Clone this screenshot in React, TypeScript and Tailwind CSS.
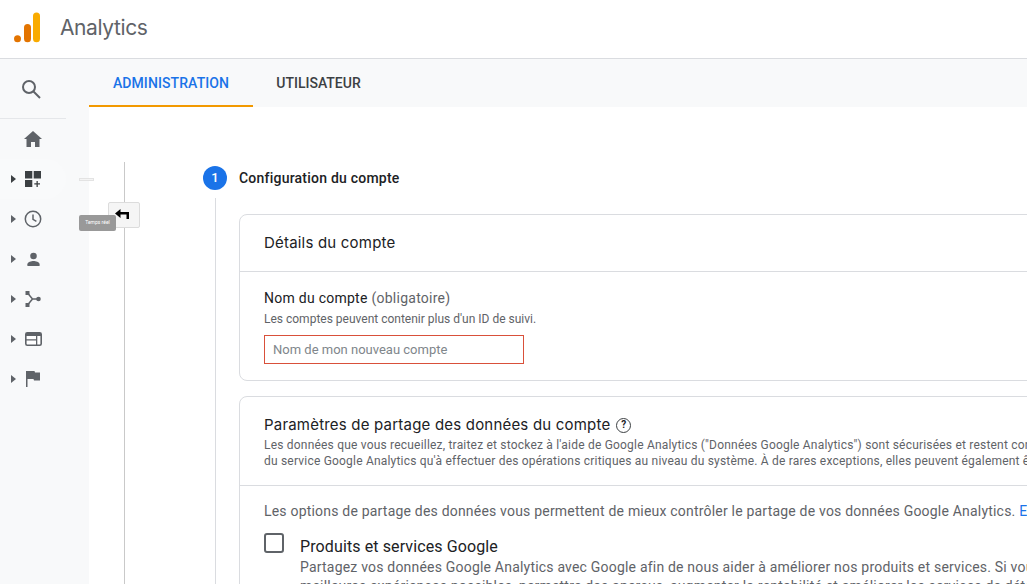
import React from "react";

const Caret = ({ dark }: { dark?: boolean }) => (
  <svg width="5" height="8" viewBox="0 0 5 8" className="absolute left-[11px] top-1/2 -translate-y-1/2">
    <path d="M0 0l5 4-5 4z" fill={dark ? "#3c4043" : "#5f6368"} />
  </svg>
);

const icons: React.ReactNode[] = [
  <svg key="d" width="16" height="16" viewBox="0 0 16 16" fill="#3c4043"><path d="M0 0h7.300v7.500H0zM8.700 0H16v7.500H8.700zM0 9h7.300v7H0zM11.500 10h1.300v2.200H15v1.300h-2.200V16h-1.300v-2.500H9.300v-1.300h2.200z" /></svg>,
  <svg key="c" width="18" height="18" viewBox="0 0 18 18" fill="none" stroke="#5f6368" strokeWidth="1.500"><circle cx="9" cy="9" r="7.700" /><path d="M9 4.500V9.400l3.400 2" /></svg>,
  <svg key="p" width="15" height="15" viewBox="0 0 16 16" fill="#5f6368"><circle cx="8" cy="4.200" r="3.500" /><path d="M1.500 15v-2c0-2.400 4.300-3.500 6.500-3.500s6.500 1.100 6.500 3.500v2z" /></svg>,
  <svg key="b" width="16" height="16" viewBox="0 0 16 16"><path d="M2.500 2l5 6h6M2.500 14l5-6" stroke="#5f6368" strokeWidth="1.500" fill="none" /><rect x="0.500" y="0" width="4" height="4" fill="#5f6368" /><rect x="0.500" y="12" width="4" height="4" fill="#5f6368" /><circle cx="13.500" cy="8" r="2.300" fill="#5f6368" /></svg>,
  <svg key="w" width="17" height="14" viewBox="0 0 17 14"><rect x="0.800" y="0.800" width="15.400" height="12.400" rx="1.500" fill="#fff" stroke="#5f6368" strokeWidth="1.600" /><path d="M1 1h15v3H1zM1 7.200h10v1.300H1zM11 4h1.300v9H11z" fill="#5f6368" /></svg>,
  <svg key="f" width="14" height="16" viewBox="0 0 14 16" fill="#5f6368"><path d="M0 0h1.500v16H0zM1.500 0h7l.5 1.500h5v8H8l-.5-1.500h-6z" /></svg>,
];

export default function App() {
  return (
    <div className="h-[584px] w-[1027px] overflow-hidden bg-white font-['Roboto',sans-serif] text-[#3c4043] relative">
      <header className="flex h-[59px] items-center border-b border-[#dadce0] bg-white">
        <svg width="28" height="32" viewBox="0 0 28 32" className="ml-[14px] mb-[3px]">
          <circle cx="3.500" cy="26.800" r="3.500" fill="#e37400" />
          <rect x="10" y="12" width="7" height="18.300" rx="3.500" fill="#e37400" />
          <rect x="19" y="0.500" width="7" height="29.800" rx="3.500" fill="#f9ab00" />
        </svg>
        <span className="ml-[18px] mb-[3px] font-['Inter',sans-serif] text-[21px] leading-none text-[#5f6368] tracking-[-0.4px]">Analytics</span>
      </header>

      <div className="flex h-[525px]">
        <aside className="w-[89px] shrink-0 bg-[#f8f9fa]">
          <div className="mr-[23px] flex h-[60px] items-center justify-center border-b border-[#e5e7ea]">
            <svg width="20" height="20" viewBox="0 0 20 20" fill="none" stroke="#5f6368" strokeWidth="2" className="mt-[1px] ml-[-4px]">
              <circle cx="8" cy="8" r="6" />
              <path d="M12.500 12.500L19 19" />
            </svg>
          </div>
          <div className="flex h-[40px] w-[66px] items-center justify-center">
            <svg width="18" height="16" viewBox="0 0 18 16" fill="#5f6368"><path d="M9 0L0 8h2.500v8H7v-5h4v5h4.500V8H18z" /></svg>
          </div>
          {icons.map((icon, i) => (
            <div key={i} className={`relative flex h-[40px] w-[66px] items-center justify-center rounded-r-[20px] ${i === 0 ? "bg-[#f9fafb]" : ""}`}>
              <Caret dark={i === 0} />
              {icon}
            </div>
          ))}
        </aside>

        <main className="relative flex-1 overflow-hidden">
          <nav className="flex h-[48px] bg-[#f8f9fa] text-[14px] font-medium">
            <div className="flex w-[164px] items-center justify-center border-b-2 border-[#f29900] pt-[2px] text-[#1a73e8] tracking-[0.1px]">ADMINISTRATION</div>
            <div className="flex w-[130px] items-center justify-center pl-[1px] text-[#3c4043]">UTILISATEUR</div>
          </nav>

          <div className="ml-[35px] mt-[55px] h-[500px] border-l border-[#c9c9c9] pl-[78px] pt-[4px]">
            <div className="flex items-center">
              <div className="flex h-[24px] w-[24px] items-center justify-center rounded-full bg-[#1a73e8] text-[13px] font-medium text-white">1</div>
              <div className="ml-[12px] text-[14px] font-medium tracking-[0.22px] text-[#202124]">Configuration du compte</div>
            </div>
            <div className="ml-[12px] mt-[8px] w-[1000px] border-l border-[#dadce0] pl-[23px] pt-[16px]">
              <section className="h-[167px] rounded-[8px] border border-[#dadce0]">
                <div className="flex h-[57px] items-center border-b border-[#dadce0] pl-[24px] font-['Inter',sans-serif] text-[15px] tracking-[0.2px] text-[#202124]">Détails du compte</div>
                <div className="pl-[24px] pt-[17px]">
                  <div className="text-[14px] leading-[18px] tracking-[0.26px] text-[#202124]">Nom du compte <span className="text-[#5f6368]">(obligatoire)</span></div>
                  <div className="mt-[4px] text-[12px] leading-[16px] text-[#5f6368]">Les comptes peuvent contenir plus d'un ID de suivi.</div>
                  <input placeholder="Nom de mon nouveau compte" className="mt-[8px] block h-[29px] w-[260px] border border-[#d9503a] px-[8px] text-[13px] placeholder:text-[#80868b] outline-none" />
                </div>
              </section>
              <section className="mt-[15px] h-[300px] rounded-[8px] border border-[#dadce0]">
                <div className="h-[89px] whitespace-nowrap border-b border-[#dadce0] pl-[24px] pt-[18px]">
                  <div className="flex items-center font-['Inter',sans-serif] text-[15px] leading-[20px] tracking-[0.2px] text-[#202124]">
                    Paramètres de partage des données du compte
                    <span className="ml-[6px] flex h-[15px] w-[15px] items-center justify-center rounded-full border border-[#3c4043] font-['Roboto',sans-serif] text-[10px] font-bold">?</span>
                  </div>
                  <div className="mt-[2px] text-[12px] leading-[16px] tracking-[0.2px] text-[#5f6368]">
                    Les données que vous recueillez, traitez et stockez à l'aide de Google Analytics ("Données Google Analytics") sont sécurisées et restent confidentielles.<br />
                    du service Google Analytics qu'à effectuer des opérations critiques au niveau du système. À de rares exceptions, elles peuvent également être
                  </div>
                </div>
                <div className="whitespace-nowrap pl-[24px] pt-[15px]">
                  <div className="text-[14px] leading-[20px] tracking-[0.2px] text-[#5f6368]">
                    Les options de partage des données vous permettent de mieux contrôler le partage de vos données Google Analytics. <span className="text-[#1a73e8]">En savoir plus</span>
                  </div>
                  <div className="mt-[15px] flex">
                    <div className="mt-[-3px] h-[20px] w-[20px] shrink-0 rounded-[3px] border-2 border-[#5f6368]" />
                    <div className="ml-[16px]">
                      <div className="text-[16px] leading-[22px] tracking-[0.11px] text-[#202124]">Produits et services Google</div>
                      <div className="text-[14px] leading-[19px] tracking-[0.2px] text-[#5f6368]">
                        Partagez vos données Google Analytics avec Google afin de nous aider à améliorer nos produits et services. Si vous<br />
                        meilleures expériences possibles, permettre des aperçus, augmenter la rentabilité et améliorer les services de détection
                      </div>
                    </div>
                  </div>
                </div>
              </section>
            </div>
          </div>
        </main>
      </div>

      <div className="absolute left-[79px] top-[178px] h-[3px] w-[15px] border border-[#e3e3e3] bg-[#f4f4f4]" />
      <div className="absolute left-[108px] top-[202px] flex h-[26px] w-[32px] items-center justify-center rounded-[2px] border border-[#dcdcdc] bg-[#f5f5f5]">
        <svg width="14" height="10" viewBox="0 0 14 10" className="mt-[-3px] ml-[-4px]"><path d="M0 4.500L5.500 0v3H14v7h-2.500V5.500h-6v3.500z" fill="#000" /></svg>
      </div>
      <div className="absolute left-[79px] top-[215px] flex h-[16px] w-[37px] items-center justify-center rounded-[2px] bg-[#999999] text-[5px] text-white">Temps réel</div>
    </div>
  );
}
